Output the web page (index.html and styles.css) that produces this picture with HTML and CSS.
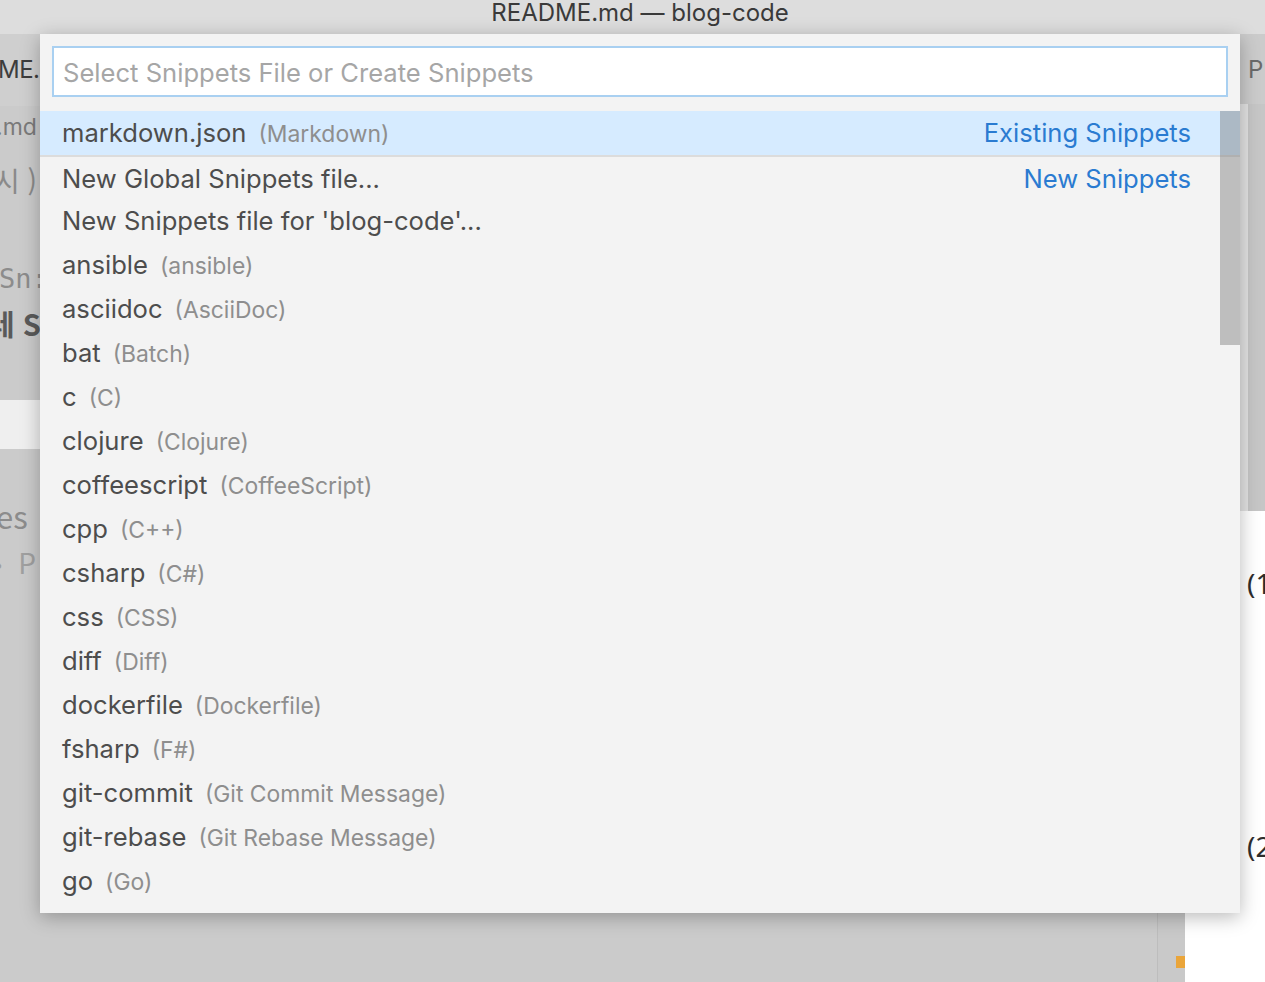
FILE: index.html
```html
<!DOCTYPE html>
<html lang="ko">
<head>
<meta charset="utf-8">
<title>README.md — blog-code</title>
<link rel="stylesheet" href="styles.css">
</head>
<body>
<div class="window">
  <header class="titlebar">README.md — blog-code</header>
  <div class="workbench">
    <section class="editor">
      <div class="editor-tabs"><span class="tab-label">ME.md</span></div>
      <div class="crumbs">.md</div>
      <div class="editor-body">
        <div class="text">
          <div class="ln ln-a">시 )</div>
          <div class="ln ln-b">Sn:</div>
          <div class="ln ln-c">레 S</div>
          <div class="band"></div>
          <div class="ln ln-d">es</div>
          <div class="ln ln-e">› P</div>
        </div>
        <div class="ruler"><span class="marker"></span></div>
      </div>
    </section>
    <section class="preview">
      <div class="preview-tabs">P</div>
      <div class="preview-media"><div class="media-img"></div></div>
      <p class="pv-line pv-1">(1</p>
      <p class="pv-line pv-2">(2</p>
    </section>
  </div>

  <div class="quickpick">
    <div class="qp-input"><input type="text" placeholder="Select Snippets File or Create Snippets"></div>
    <div class="qp-list">
      <div class="row focused"><span class="lbl">markdown.json</span><span class="desc">(Markdown)</span><span class="sep">Existing Snippets</span></div>
      <div class="row grouped"><span class="lbl">New Global Snippets file...</span><span class="sep">New Snippets</span></div>
      <div class="row"><span class="lbl">New Snippets file for 'blog-code'...</span></div>
      <div class="row"><span class="lbl">ansible</span><span class="desc">(ansible)</span></div>
      <div class="row"><span class="lbl">asciidoc</span><span class="desc">(AsciiDoc)</span></div>
      <div class="row"><span class="lbl">bat</span><span class="desc">(Batch)</span></div>
      <div class="row"><span class="lbl">c</span><span class="desc">(C)</span></div>
      <div class="row"><span class="lbl">clojure</span><span class="desc">(Clojure)</span></div>
      <div class="row"><span class="lbl">coffeescript</span><span class="desc">(CoffeeScript)</span></div>
      <div class="row"><span class="lbl">cpp</span><span class="desc">(C++)</span></div>
      <div class="row"><span class="lbl">csharp</span><span class="desc">(C#)</span></div>
      <div class="row"><span class="lbl">css</span><span class="desc">(CSS)</span></div>
      <div class="row"><span class="lbl">diff</span><span class="desc">(Diff)</span></div>
      <div class="row"><span class="lbl">dockerfile</span><span class="desc">(Dockerfile)</span></div>
      <div class="row"><span class="lbl">fsharp</span><span class="desc">(F#)</span></div>
      <div class="row"><span class="lbl">git-commit</span><span class="desc">(Git Commit Message)</span></div>
      <div class="row"><span class="lbl">git-rebase</span><span class="desc">(Git Rebase Message)</span></div>
      <div class="row"><span class="lbl">go</span><span class="desc">(Go)</span></div>
      <div class="slider"></div>
    </div>
  </div>
</div>
</body>
</html>
```

FILE: styles.css
```css
* { box-sizing: border-box; }
html, body { margin: 0; padding: 0; }
body {
  width: 1265px;
  height: 982px;
  overflow: hidden;
  background: #cbcbcb;
  font-family: Inter, "Noto Sans", "Noto Sans CJK KR", sans-serif;
}
.window {
  position: relative;
  width: 1265px;
  height: 982px;
  display: flex;
  flex-direction: column;
}
.titlebar {
  height: 34px;
  flex: none;
  background: #dddddd;
  color: #3a3a3a;
  font-size: 24px;
  line-height: 26px;
  text-align: center;
  padding-left: 15px;
}
.workbench {
  flex: 1;
  display: flex;
  min-height: 0;
}
.editor {
  width: 1185px;
  flex: none;
  display: flex;
  flex-direction: column;
  background: #cbcbcb;
}
.editor-tabs {
  height: 72px;
  flex: none;
  background: #cfcfcf;
  display: flex;
  align-items: center;
  padding-bottom: 2px;
}
.tab-label {
  margin-left: -2px;
  font-size: 24px;
  color: #3d3d3d;
  letter-spacing: -0.5px;
}
.crumbs {
  height: 44px;
  flex: none;
  margin-left: -4px;
  font-size: 23px;
  line-height: 42px;
  color: #7a7a7a;
}
.editor-body {
  flex: 1;
  display: flex;
}
.text {
  flex: 1;
  display: flex;
  flex-direction: column;
  font-family: "Noto Sans CJK KR", "Noto Sans", sans-serif;
}
.ln { white-space: nowrap; }
.ln-a {
  margin-top: 10px;
  margin-left: -6px;
  font-size: 28px;
  line-height: 40px;
  color: #8a8a8a;
}
.ln-b {
  margin-top: 59px;
  margin-left: -1px;
  font-family: "DejaVu Sans Mono", monospace;
  font-size: 27px;
  line-height: 40px;
  color: #8c8c8c;
}
.ln-c {
  margin-top: 4px;
  margin-left: -12px;
  font-size: 29px;
  line-height: 40px;
  font-weight: 700;
  color: #5a5a5a;
}
.band {
  margin-top: 57px;
  height: 49px;
  background: #efefef;
}
.ln-d {
  margin-top: 47px;
  margin-left: -4px;
  font-size: 31px;
  line-height: 40px;
  color: #8c8c8c;
}
.ln-e {
  margin-top: 6px;
  margin-left: -6px;
  font-size: 28px;
  line-height: 40px;
  color: #a0a0a0;
  word-spacing: 8px;
}
.ruler {
  width: 28px;
  flex: none;
  border-left: 1px solid #bdbdbd;
  background: #c9c9c9;
  display: flex;
  flex-direction: column;
  justify-content: flex-end;
  align-items: flex-end;
  padding-bottom: 14px;
}
.marker {
  width: 9px;
  height: 12px;
  background: #eaa53a;
}
.preview {
  flex: 1;
  background: #ffffff;
  display: flex;
  flex-direction: column;
  font-family: "Noto Sans", sans-serif;
}
.preview-tabs {
  height: 70px;
  flex: none;
  background: #cbcbcb;
  padding-left: 63px;
  font-size: 24px;
  line-height: 72px;
  color: #6a6a6a;
  font-family: Inter, sans-serif;
}
.preview-media {
  height: 407px;
  flex: none;
  padding-left: 55px;
  background: #ffffff;
}
.media-img {
  height: 100%;
  border-left: 8px solid #e3e3e3;
  background: #c6c6c6;
}
.pv-line {
  margin: 0;
  padding-left: 62px;
  font-size: 28px;
  line-height: 36px;
  color: #2e2e2e;
}
.pv-1 { margin-top: 54px; }
.pv-2 { margin-top: 227px; }

/* Quick pick overlay */
.quickpick {
  position: absolute;
  left: 40px;
  top: 34px;
  width: 1200px;
  height: 879px;
  background: #f3f3f3;
  box-shadow: 0 4px 18px rgba(0, 0, 0, 0.28);
  padding: 12px 0 0 0;
  display: flex;
  flex-direction: column;
}
.qp-input {
  margin: 0 12px;
  height: 51px;
  border: 2px solid #a9d0f1;
  background: #ffffff;
  display: flex;
}
.qp-input input {
  flex: 1;
  border: none;
  outline: none;
  background: transparent;
  padding: 1px 0 0 9px;
  font-family: Inter, sans-serif;
  font-size: 25.6px;
  color: #333;
}
.qp-input input::placeholder {
  color: #a6a6a6;
}
.qp-list {
  position: relative;
  margin-top: 14px;
  flex: 1;
  overflow: hidden;
}
.row {
  height: 44px;
  display: flex;
  align-items: baseline;
  line-height: 44px;
  padding: 0 49px 0 22px;
  white-space: nowrap;
}
.row.focused { background: #d6ebff; }
.row.grouped { border-top: 2px solid #dcdcdc; line-height: 44px; }
.lbl {
  font-size: 25.6px;
  color: #4d4d4d;
}
.desc {
  margin-left: 12px;
  font-size: 22.9px;
  color: #8e8e8e;
}
.sep {
  margin-left: auto;
  font-size: 25.6px;
  color: #2a7bd1;
}
.slider {
  position: absolute;
  right: 0;
  top: 0;
  width: 20px;
  height: 234px;
  background: rgba(110, 110, 110, 0.4);
}
```
